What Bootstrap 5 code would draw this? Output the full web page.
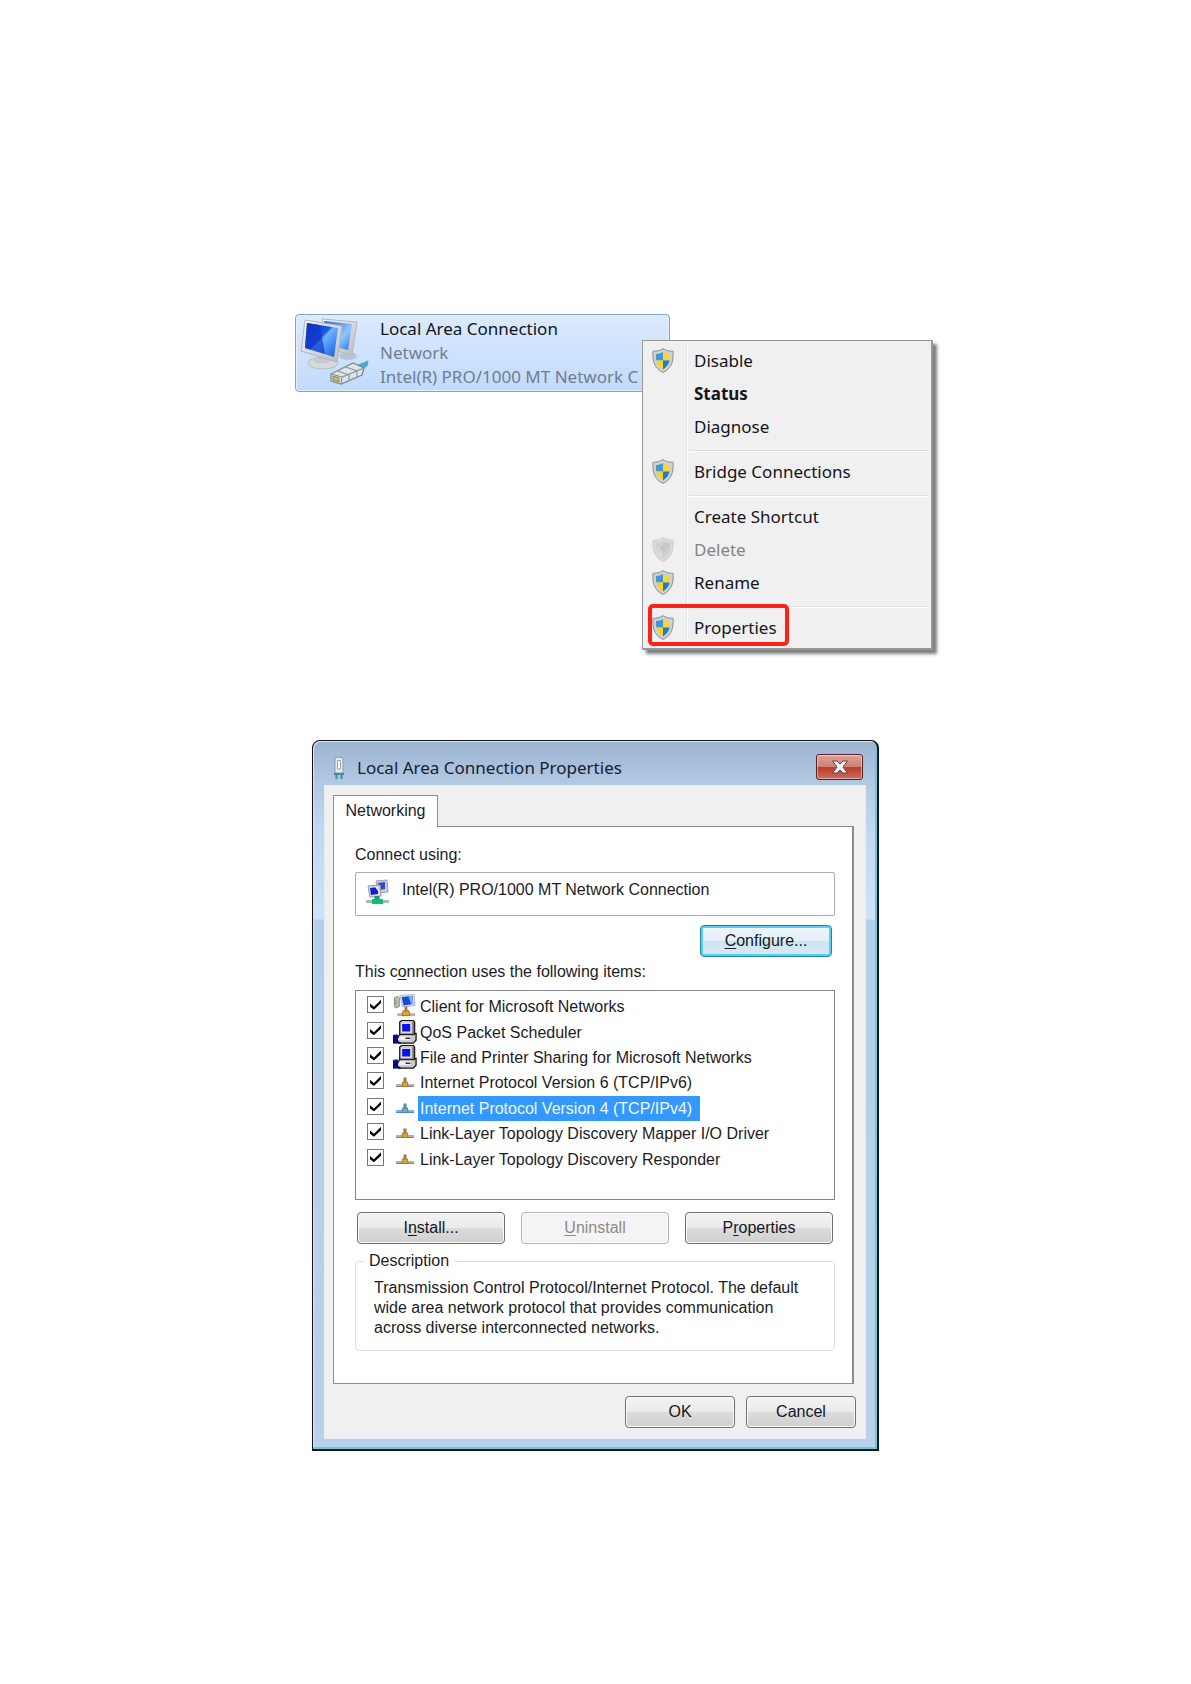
<!DOCTYPE html>
<html lang="en">
<head>
<meta charset="utf-8">
<meta name="viewport" content="width=device-width, initial-scale=1">
<title>Local Area Connection Properties</title>
<link href="https://cdn.jsdelivr.net/npm/bootstrap@5.3.0/dist/css/bootstrap.min.css" rel="stylesheet">
<style>
  body { background: #fff; color: #1c1c24; font: 16px/20px "Liberation Sans", Arial, sans-serif; }
  .page-body { padding: 314px 16px 232px; }
  .segoe { font-family: "Noto Sans", "Open Sans", sans-serif; font-size: 17px; }
  u { text-underline-offset: 2px; }

  /* connection tile with its context menu */
  .connection { width: 100%; max-width: 601px; min-height: 336px; }
  .conn-tile { max-width: 375px; height: 78px; border: 1px solid #7da2ce; border-radius: 4px;
    background: linear-gradient(#dceafc, #c1dbfc); padding: 2px 4px; gap: 10px; line-height: 24px;
    box-shadow: inset 0 0 0 1px #e6f0fd; overflow: hidden; white-space: nowrap; color: #6f7d8f; }
  .conn-name { color: #10141c; }
  .conn-tile svg { width: 70px; height: 70px; flex: none; }
  .ctx-menu { left: 347px; top: 26px; width: 291px; padding: 3px 3px 4px; border: 1px solid #979797;
    border-right-width: 2px; border-bottom-width: 2px;
    background: #f0f0f0; box-shadow: 4px 4px 3px rgba(0,0,0,.5); }
  .ctx-menu::before { content: ""; position: absolute; left: 43px; top: 4px; bottom: 4px; width: 2px;
    border-left: 1px solid #e2e3e3; border-right: 1px solid #fff; }
  .ctx-item { height: 33px; width: 100%; border: 0; background: none; padding: 0 0 0 6px; gap: 20px; color: #15151a; text-align: left; }
  .ctx-item:disabled { color: #838383; }
  .ctx-item svg, .ctx-blank { width: 22px; height: 25px; flex: none; }
  .ctx-line { height: 12px; padding: 7px 0 3px 43px; }
  .ctx-line div { border-top: 1px solid #e0e0e0; border-bottom: 1px solid #fff; }
  .callout-box { left: 5px; bottom: 2px; width: 141px; height: 42px; border: 4px solid #fa2315; border-radius: 5px; pointer-events: none; }

  /* properties window */
  .prop-window { width: 100%; max-width: 567px; margin-top: 90px; border: 1px solid #111; border-right-width: 2px; border-bottom-width: 2px; border-radius: 8px 8px 0 0;
    padding: 0 11px 10px; background: linear-gradient(#9ab4d0 0, #b4cae4 45px, #c3d7ef 90px, #d0e2f8 178px, #b5cfea 179px, #bbd1e9 100%);
    box-shadow: inset -2px -2px 0 #57cfe9, inset 1px 1px 0 #dbe9f6; }
  .title-row { height: 44px; padding: 10px 3px 0 8px; color: #17202e; }
  .title-row svg.plug { width: 14px; height: 24px; margin-right: 11px; }
  .close-x { width: 47px; height: 26px; padding: 0; border: 1px solid #56202a; border-radius: 3px; margin-bottom: 2px;
    background: linear-gradient(#e0a39a 0, #d07f75 48%, #b93b2b 50%, #cc6b5a 100%); box-shadow: inset 0 0 0 1px rgba(255,255,255,.45); }
  .client { background: #f0f0f0; border: 1px solid #e4edf8; padding: 9px 11px 10px 8px; }
  .tab-btn { width: 105px; height: 32px; border: 1px solid #8b8d92; border-bottom: 0; background: #fff; margin-bottom: -1px; padding: 0 0 2px; color: inherit; }
  .tab-sheet { border: 1px solid #8b8d92; border-right-width: 2px; background: #fff; padding: 18px 17px 32px 21px; }
  .adapter-box { height: 44px; margin-top: 7px; border: 1px solid #abadb3; border-radius: 2px; padding: 0 10px 8px; gap: 12px; }
  .adapter-box svg { width: 24px; height: 26px; margin-top: 4px; }
  .win-btn { height: 32px; border: 1px solid #707070; border-radius: 4px; padding: 0; color: #16161c;
    background: linear-gradient(#f3f3f3 0, #ebebeb 48%, #dcdcdc 50%, #cfcfcf 100%); box-shadow: inset 0 0 0 1px #fafafa; }
  .win-btn:disabled { border-color: #b2b4b5; background: #f4f4f4; color: #8b8b8b; }
  .win-btn.is-default { width: 132px; margin: 9px 3px 5px 0; border-color: #2c7fa5;
    background: linear-gradient(#eff7fb 0, #e4f0f7 48%, #cfe4f0 50%, #d5eaf4 100%); box-shadow: inset 0 0 0 2px #51d3f3; }
  .items-box { border: 1px solid #82868d; height: 210px; margin-top: 8px; padding: 3px 11px 27px; }
  .item-row { flex: 1 1 0; min-height: 0; }
  .item-row input { appearance: none; width: 17px; height: 17px; margin: 0 9px 4px 0; border: 1px solid #777; background: #fff; flex: none; display: grid; place-items: center; }
  .item-row input:checked::before { content: ""; width: 11px; height: 10px; background: #050505; clip-path: polygon(0 38%, 36% 70%, 100% 0, 100% 34%, 36% 100%, 0 70%); }
  .item-row svg { width: 25px; height: 25px; flex: none; overflow: visible; }
  .item-row label { height: 25px; line-height: 25px; padding: 0 8px 0 2px; white-space: nowrap; }
  .item-row.picked label { background: #3399ff; color: #f2f8ff; }
  .btn-trio { gap: 16px; margin: 12px 2px 0; }
  .btn-trio .win-btn { flex: 1 1 0; }
  .desc-set { border: 1px solid #dce0e3; border-radius: 4px; padding: 7px 18px 12px; margin: 7px 0 0; }
  .desc-set legend { float: none; width: auto; font-size: inherit; line-height: 20px; margin: 0 0 0 -10px; padding: 0 5px; }
  .desc-set p { margin: 0; }
  .bottom-row { gap: 11px; margin: 12px -2px 0 0; }
  .bottom-row .win-btn { width: 110px; }
</style>
<script src="https://cdn.jsdelivr.net/npm/bootstrap@5.3.0/dist/js/bootstrap.bundle.min.js"></script>
</head>
<body>
<svg width="0" height="0" class="position-absolute" aria-hidden="true">
  <defs>
    <linearGradient id="scr" x1="0" y1="0" x2="1" y2="1"><stop offset="0" stop-color="#0b2fc0"/><stop offset=".45" stop-color="#1a5be6"/><stop offset=".5" stop-color="#6db4ff"/><stop offset="1" stop-color="#1456e0"/></linearGradient>
    <linearGradient id="scr2" x1="0" y1="0" x2="1" y2="1"><stop offset="0" stop-color="#1f5fe6"/><stop offset=".6" stop-color="#8ec8ff"/><stop offset="1" stop-color="#2a6fe8"/></linearGradient>
    <linearGradient id="metal" x1="0" y1="0" x2="1" y2="1"><stop offset="0" stop-color="#f6f6f6"/><stop offset="1" stop-color="#b9bdc0"/></linearGradient>
    <clipPath id="shieldClip"><path d="M11 4C8.500 5.500 6 6 4 6C3.500 13 5.500 18 11 21.500C16.500 18 18.500 13 18 6C16 6 13.500 5.500 11 4Z"/></clipPath>
    <symbol id="shield" viewBox="0 0 22 25">
      <path d="M11 .6C8 2.600 4.500 3.400 1 3.200C.2 13 2.500 20.500 11 24.400C19.500 20.500 21.800 13 21 3.200C17.500 3.400 14 2.600 11 .6Z" fill="#cfd2d3" stroke="#8b8f92"/>
      <g clip-path="url(#shieldClip)"><path d="M0 0H11V12.500H0Z" fill="#3f97d8"/><path d="M11 0H22V12.500H11Z" fill="#f6d63c"/><path d="M0 12.500H11V25H0Z" fill="#f8d21f"/><path d="M11 12.500H22V25H11Z" fill="#1f7cc6"/></g>
    </symbol>
    <symbol id="shieldOff" viewBox="0 0 22 25">
      <path d="M11 .6C8 2.600 4.500 3.400 1 3.200C.2 13 2.500 20.500 11 24.400C19.500 20.500 21.800 13 21 3.200C17.500 3.400 14 2.600 11 .6Z" fill="#d9d9d9" stroke="#d0d0d0"/>
      <g clip-path="url(#shieldClip)"><path d="M0 0H11V12H0Z" fill="#d0d0d0"/><path d="M11 0H22V12H11Z" fill="#c8c8c8"/><path d="M0 12H11V25H0Z" fill="#d8d8d8"/><path d="M11 12H22V25H11Z" fill="#cecece"/><path d="M11 7L8 13H11V18L13 12H11Z" fill="#c0c0c0"/></g>
    </symbol>
    <symbol id="proto" viewBox="0 0 25 25">
      <path d="M3 15.500H21" stroke="#b4b2ac" stroke-width="3"/><path d="M3 16.500H21" stroke="#84817a"/>
      <path d="M12 7.500V12" stroke="#8f7a4c" stroke-width="3"/><path d="M9.500 12H14.500L15 16.500H9Z" fill="#dba32b" stroke="#a87b2b"/>
    </symbol>
    <symbol id="protoSel" viewBox="0 0 25 25">
      <path d="M3 15.500H21" stroke="#7fb4e2" stroke-width="3"/><path d="M3 16.500H21" stroke="#4b8cc8"/>
      <path d="M12 7.500V12" stroke="#5088b8" stroke-width="3"/><path d="M9.500 12H14.500L15 16.500H9Z" fill="#80a9b5" stroke="#4b83ae"/>
    </symbol>
    <symbol id="service" viewBox="0 0 26 26">
      <path d="M7 2L9 .5H21L22.500 2V14H24V21L21 24H6L4 20L7 15Z" fill="#c9c9c9" stroke="#111" stroke-width="1.300"/>
      <path d="M20 2H22V14H20Z" fill="#777"/><path d="M9 3.500H18.500V12.500H9Z" fill="#0b12e6" stroke="#f4f4f4"/>
      <path d="M7 15H23" stroke="#222" stroke-width="1.500"/><path d="M7 17H19L18 21H5.500Z" fill="#efefef"/><path d="M13 19H18" stroke="#333" stroke-width="1.500"/>
      <path d="M0 16L4.500 15.500V22L8 24H0Z" fill="#08089c" stroke="#050550"/>
    </symbol>
    <symbol id="client" viewBox="0 0 26 26">
      <path d="M1.500 4L5 2.500L6.500 4V13L3 14.500L1.500 13Z" fill="#b9c4b5" stroke="#7c877a"/><path d="M3 6V11" stroke="#59b347"/>
      <path d="M7 1.500L22 .5L23 12L10 13.500Z" fill="#d3dcee" stroke="#b4bccb"/><path d="M9 3L20.500 2L21 10.500L11 12Z" fill="#1748d8"/><path d="M16 2.500L20.500 2L21 10.500L19 10.800Z" fill="#7fa9f1"/>
      <path d="M13.500 13V18" stroke="#98804a" stroke-width="3"/><path d="M4.500 21.500H23" stroke="#b9b1a0" stroke-width="3"/><path d="M10.500 17.500H16.500L17.500 22.500H9.500Z" fill="#e0a62a" stroke="#9b742b"/>
    </symbol>
  </defs>
</svg>

<main class="page-body container-fluid">
  <section class="connection position-relative mx-auto segoe">
    <div class="conn-tile d-flex">
      <svg viewBox="0 0 70 70" aria-hidden="true">
        <ellipse cx="48" cy="39" rx="9" ry="4" fill="#aab0b5" opacity=".6"/>
        <path d="M22 2L57 5L52 38L28 32Z" fill="url(#metal)" stroke="#b2b9c0"/>
        <path d="M24 4L52 7L48 33L30 29Z" fill="url(#scr2)"/>
        <path d="M17 37L31 40L30 47H18Z" fill="#c6cbcf"/>
        <ellipse cx="23" cy="46" rx="15" ry="6" fill="#d7dadd" stroke="#b6bbc0"/><ellipse cx="22" cy="43" rx="9" ry="3.500" fill="#c4c9cd"/>
        <path d="M5 3L42 9L37 45L1 34Z" fill="url(#metal)" stroke="#b0b6bc"/>
        <path d="M7 6L38 11L34 40L5 31Z" fill="url(#scr)"/><path d="M7 6L20 8L25 37L5 31Z" fill="#0c33c4" opacity=".65"/>
        <path d="M56 49L68 44L67 49L60 53Z" fill="#3bb4c9" stroke="#5aa9bb"/>
        <path d="M31 57L53 46L64 51L62 58L41 67L31 64Z" fill="#dfe4e8" stroke="#7f8991" stroke-width="1.300"/>
        <path d="M31 57L42 60L64 51M42 60L41 67M38 54L49 58M46 50L57 54M49 58V64M57 54V60" fill="none" stroke="#8b949b" stroke-width="1.200"/>
        <path d="M33 59L39 61V65L33 63Z" fill="#c9bd5a" stroke="#85875f"/>
      </svg>
      <div><div class="conn-name">Local Area Connection</div><div>Network</div><div>Intel(R) PRO/1000 MT Network C</div></div>
    </div>
    <div class="ctx-menu position-absolute">
      <button type="button" class="ctx-item d-flex align-items-center"><svg aria-hidden="true"><use href="#shield"/></svg>Disable</button>
      <button type="button" class="ctx-item d-flex align-items-center fw-bold"><span class="ctx-blank"></span>Status</button>
      <button type="button" class="ctx-item d-flex align-items-center"><span class="ctx-blank"></span>Diagnose</button>
      <div class="ctx-line"><div></div></div>
      <button type="button" class="ctx-item d-flex align-items-center"><svg aria-hidden="true"><use href="#shield"/></svg>Bridge Connections</button>
      <div class="ctx-line"><div></div></div>
      <button type="button" class="ctx-item d-flex align-items-center"><span class="ctx-blank"></span>Create Shortcut</button>
      <button type="button" class="ctx-item d-flex align-items-center" disabled><svg aria-hidden="true"><use href="#shieldOff"/></svg>Delete</button>
      <button type="button" class="ctx-item d-flex align-items-center"><svg aria-hidden="true"><use href="#shield"/></svg>Rename</button>
      <div class="ctx-line"><div></div></div>
      <button type="button" class="ctx-item d-flex align-items-center"><svg aria-hidden="true"><use href="#shield"/></svg>Properties</button>
      <div class="callout-box position-absolute"></div>
    </div>
  </section>

  <section class="prop-window mx-auto">
    <header class="title-row segoe d-flex align-items-center">
      <svg class="plug" viewBox="0 0 14 24" aria-hidden="true"><path d="M3 2Q7 0 11 2V17H3Z" fill="#e3ebf1" stroke="#8d9ba8"/><path d="M5.500 4.500H8.500V13H5.500Z" fill="#fff" stroke="#93a1ad"/><path d="M2 18H12" stroke="#4a8796" stroke-width="2"/><path d="M4.500 19V23M9.500 19V23" stroke="#3795aa" stroke-width="2"/></svg>
      <span class="me-auto">Local Area Connection Properties</span>
      <button type="button" class="close-x d-flex align-items-center justify-content-center" aria-label="Close"><svg width="18" height="14" viewBox="0 0 18 14" aria-hidden="true"><path d="M1.500 1H6L9 4L12 1H16.500L12 7L16.500 13H12L9 10L6 13H1.500L6 7Z" fill="#f6f6f6" stroke="#5a4450"/></svg></button>
    </header>
    <div class="client">
      <div class="d-flex"><button type="button" class="tab-btn position-relative">Networking</button></div>
      <div class="tab-sheet">
        <div>Connect using:</div>
        <div class="adapter-box d-flex align-items-center">
          <svg viewBox="0 0 24 26" aria-hidden="true"><path d="M10 2L21 1L22 13L12 14Z" fill="#c8cede" stroke="#9aa0b4"/><path d="M12 4L19 3V10L13 11Z" fill="#3b45bd"/><path d="M2 7L14 6L15 17L4 18Z" fill="#d9dde8" stroke="#949bb0"/><path d="M4 9L12 8V15L5 16Z" fill="#1a1fc4"/><path d="M9 8H12V12Z" fill="#e7edff"/><path d="M11 17V20" stroke="#1c9c62" stroke-width="5"/><path d="M0 22.500H23" stroke="#a5bdb0" stroke-width="3"/><path d="M6 20H17V25H6Z" fill="#13bd70"/></svg>
          <span>Intel(R) PRO/1000 MT Network Connection</span>
        </div>
        <div class="d-flex justify-content-end"><button type="button" class="win-btn is-default"><u>C</u>onfigure...</button></div>
        <div>This c<u>o</u>nnection uses the following items:</div>
        <div class="items-box d-flex flex-column">
          <div class="item-row d-flex align-items-center"><input type="checkbox" id="i1" checked><svg aria-hidden="true"><use href="#client"/></svg><label for="i1">Client for Microsoft Networks</label></div>
          <div class="item-row d-flex align-items-center"><input type="checkbox" id="i2" checked><svg aria-hidden="true"><use href="#service"/></svg><label for="i2">QoS Packet Scheduler</label></div>
          <div class="item-row d-flex align-items-center"><input type="checkbox" id="i3" checked><svg aria-hidden="true"><use href="#service"/></svg><label for="i3">File and Printer Sharing for Microsoft Networks</label></div>
          <div class="item-row d-flex align-items-center"><input type="checkbox" id="i4" checked><svg aria-hidden="true"><use href="#proto"/></svg><label for="i4">Internet Protocol Version 6 (TCP/IPv6)</label></div>
          <div class="item-row picked d-flex align-items-center"><input type="checkbox" id="i5" checked><svg aria-hidden="true"><use href="#protoSel"/></svg><label for="i5">Internet Protocol Version 4 (TCP/IPv4)</label></div>
          <div class="item-row d-flex align-items-center"><input type="checkbox" id="i6" checked><svg aria-hidden="true"><use href="#proto"/></svg><label for="i6">Link-Layer Topology Discovery Mapper I/O Driver</label></div>
          <div class="item-row d-flex align-items-center"><input type="checkbox" id="i7" checked><svg aria-hidden="true"><use href="#proto"/></svg><label for="i7">Link-Layer Topology Discovery Responder</label></div>
        </div>
        <div class="btn-trio d-flex">
          <button type="button" class="win-btn">I<u>n</u>stall...</button>
          <button type="button" class="win-btn" disabled><u>U</u>ninstall</button>
          <button type="button" class="win-btn">P<u>r</u>operties</button>
        </div>
        <fieldset class="desc-set">
          <legend>Description</legend>
          <p>Transmission Control Protocol/Internet Protocol. The default<br>wide area network protocol that provides communication<br>across diverse interconnected networks.</p>
        </fieldset>
      </div>
      <div class="bottom-row d-flex justify-content-end">
        <button type="button" class="win-btn">OK</button>
        <button type="button" class="win-btn">Cancel</button>
      </div>
    </div>
  </section>
</main>
</body>
</html>
